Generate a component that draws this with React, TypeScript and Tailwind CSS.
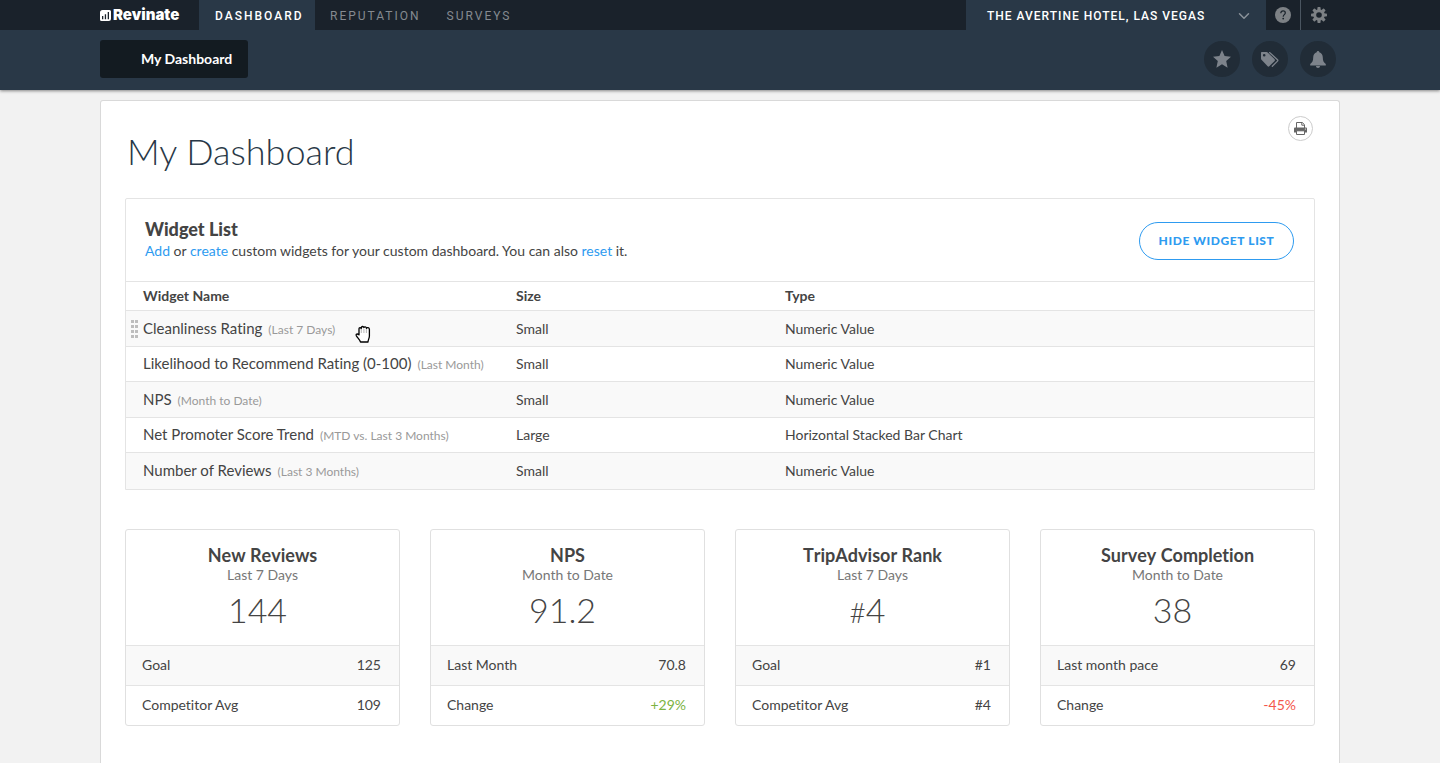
import React from "react";
import { ChevronDown } from "lucide-react";

const widgets = [
  { name: "Cleanliness Rating", period: "(Last 7 Days)", size: "Small", type: "Numeric Value", active: true },
  { name: "Likelihood to Recommend Rating (0-100)", period: "(Last Month)", size: "Small", type: "Numeric Value" },
  { name: "NPS", period: "(Month to Date)", size: "Small", type: "Numeric Value" },
  { name: "Net Promoter Score Trend", period: "(MTD vs. Last 3 Months)", size: "Large", type: "Horizontal Stacked Bar Chart" },
  { name: "Number of Reviews", period: "(Last 3 Months)", size: "Small", type: "Numeric Value" },
];

type Card = {
  title: string;
  period: string;
  prefix?: string;
  value: string;
  rows: { label: string; value: string; tone?: string }[];
};

const cards: Card[] = [
  { title: "New Reviews", period: "Last 7 Days", value: "144", rows: [{ label: "Goal", value: "125" }, { label: "Competitor Avg", value: "109" }] },
  { title: "NPS", period: "Month to Date", value: "91.2", rows: [{ label: "Last Month", value: "70.8" }, { label: "Change", value: "+29%", tone: "text-[#7cb342]" }] },
  { title: "TripAdvisor Rank", period: "Last 7 Days", prefix: "#", value: "4", rows: [{ label: "Goal", value: "#1" }, { label: "Competitor Avg", value: "#4" }] },
  { title: "Survey Completion", period: "Month to Date", value: "38", rows: [{ label: "Last month pace", value: "69" }, { label: "Change", value: "-45%", tone: "text-[#f4574b]" }] },
];

function LogoMark() {
  return (
    <svg width="11" height="11" viewBox="0 0 11 11" className="shrink-0" aria-hidden="true">
      <path d="M2.500 0H9.500A1.500 1.500 0 0 1 11 1.500V8.500A2.500 2.500 0 0 1 8.500 11H1.500A1.500 1.500 0 0 1 0 9.500V2.500A2.500 2.500 0 0 1 2.500 0Z" fill="#fff" />
      <path d="M2 6h1.300v3.200H2zM4.800 4.200h1.300v5H4.800zM7.700 2h1.300v7.200H7.700z" fill="#1a222b" />
    </svg>
  );
}

function HelpIcon() {
  return (
    <svg width="16" height="16" viewBox="0 0 16 16" aria-hidden="true">
      <circle cx="8" cy="8" r="8" fill="#7d8185" />
      <path d="M5.800 6.200C5.800 4.700 6.700 3.900 8.100 3.900s2.200.8 2.200 2c0 1.700-2.100 1.900-2.100 3.800" fill="none" stroke="#1a222b" strokeWidth="1.200" />
      <circle cx="8.200" cy="11.600" r=".9" fill="#1a222b" />
    </svg>
  );
}

function GearIcon() {
  return (
    <svg width="16" height="16" viewBox="0 0 16 16" fill="#7d8185" aria-hidden="true">
      {[0, 45, 90, 135].map((angle) => (
        <rect key={angle} x="6.400" y="0" width="3.200" height="16" rx=".8" transform={`rotate(${angle} 8 8)`} />
      ))}
      <circle cx="8" cy="8" r="5.800" />
      <circle cx="8" cy="8" r="2.800" fill="#1a222b" />
    </svg>
  );
}

function StarIcon() {
  return (
    <svg width="18" height="18" viewBox="0 0 18 18" fill="#7d838b" aria-hidden="true">
      <path d="M9 0l2.600 6.100 6.400.6-4.800 4.400 1.400 6.600L9 14.300l-5.600 3.400 1.400-6.600L0 6.700l6.400-.6Z" />
    </svg>
  );
}

function TagsIcon() {
  return (
    <svg width="18" height="15" viewBox="0 0 18 15" fill="#7d838b" aria-hidden="true">
      <path
        fillRule="evenodd"
        d="M1 0h4.500c.5 0 .9.200 1.200.5l6.700 6.600c.7.700.7 1.400 0 2.100l-4.900 4.900c-.7.700-1.400.7-2.100 0L.5 7.700C.2 7.300 0 6.900 0 6.400V1C0 .4.4 0 1 0Zm2.200 2a1.300 1.300 0 1 0 0 2.600 1.300 1.300 0 0 0 0-2.600Z"
      />
      <path d="M8.600.6l7.900 7.200c.4.400.4.900 0 1.300l-5.200 5.200" fill="none" stroke="#7d838b" strokeWidth="1.300" strokeLinecap="round" />
    </svg>
  );
}

function BellIcon() {
  return (
    <svg width="16" height="17" viewBox="0 0 16 17" fill="#7d838b" aria-hidden="true">
      <path d="M8 0c.8 0 1.300.6 1.300 1.300C11.600 2 12.800 4 12.800 6.500c0 3.500.9 5 3 6.500v1.500H.2V13c2.100-1.500 3-3 3-6.500C3.200 4 4.400 2 6.700 1.300 6.700.6 7.200 0 8 0Z" />
      <path d="M6 15h4c0 1.200-.8 2-2 2s-2-.8-2-2Z" />
    </svg>
  );
}

function PrintIcon() {
  return (
    <svg width="13" height="13" viewBox="0 0 13 13" aria-hidden="true">
      <path d="M2.500 6V.5h5.800l2.200 2.200V6M7.800.5v2.700h2.700" fill="none" stroke="#666" />
      <path d="M1.200 5.500h10.600c.7 0 1.200.5 1.200 1.200V10.500H0V6.700c0-.7.500-1.200 1.200-1.200Z" fill="#666" />
      <path d="M2.500 8.800h8v3.700h-8z" fill="#fff" stroke="#666" />
      <circle cx="11.400" cy="7" r=".6" fill="#fff" />
    </svg>
  );
}

function GrabHand() {
  return (
    <svg width="16" height="18" viewBox="0 0 16 18" aria-hidden="true">
      <path
        d="M4 9.500V3.800c0-1.500 2-1.500 2.200-.2C6.200 1 8.700.9 8.900 2.700c.3-1.300 2.500-1.200 2.600.7.400-1.200 2.800-1.100 2.900 1V11c0 2.600-1.400 3.600-1.400 6H5.500C5 15 2.400 12.800 1.300 10.600.600 9 2.400 8.300 4 9.900Z"
        fill="#fff"
        stroke="#000"
        strokeWidth="1.300"
        strokeLinejoin="round"
      />
      <path d="M6.300 4v4M8.900 4v4M11.400 4v4" stroke="#999" strokeWidth=".7" />
    </svg>
  );
}

function DragHandle() {
  return (
    <span className="absolute left-[5px] top-[9px] grid grid-cols-2 gap-px">
      {Array.from({ length: 8 }, (_, i) => (
        <span key={i} className="mb-px size-[3px] bg-[#bdbdbd]" />
      ))}
    </span>
  );
}

function RoundButton({ label, children }: { label: string; children: React.ReactNode }) {
  return (
    <button type="button" aria-label={label} className="flex size-9 items-center justify-center rounded-full bg-[#212c37]">
      {children}
    </button>
  );
}

export default function App() {
  return (
    <div className="min-h-screen bg-[#f2f2f2] font-['Lato',sans-serif] text-[#444] [font-variant-ligatures:none]">
      <header className="bg-[#293847] shadow-[0_1px_3px_rgba(0,0,0,0.45)]">
        <div className="bg-[#1a222b]">
          <div className="mx-auto flex h-[30px] max-w-[1240px] items-stretch font-['Roboto',sans-serif] text-xs">
            <a href="#" className="flex w-[99px] items-center gap-[2px] font-['Inter',sans-serif] text-[15px] font-black text-white">
              <LogoMark />
              Revinate
            </a>
            <nav className="flex tracking-[2px] text-[#858a90]">
              <a href="#" className="flex w-[116px] items-center bg-[#293847] pl-4 pt-[2px] font-medium text-white">DASHBOARD</a>
              <a href="#" className="flex items-center pl-[15px] pt-[2px]">REPUTATION</a>
              <a href="#" className="flex items-center pl-[26px] pt-[2px]">SURVEYS</a>
            </nav>
            <button type="button" className="ml-auto flex w-[300px] items-center justify-between bg-[#293847] pl-[21px] pr-[13px] pt-[2px] font-medium tracking-[1px] text-white">
              THE AVERTINE HOTEL, LAS VEGAS
              <ChevronDown size={18} strokeWidth={2} className="text-[#8a9199]" />
            </button>
            <button type="button" aria-label="Help" className="flex w-[35px] items-center justify-center border-r border-[#4a5560]">
              <HelpIcon />
            </button>
            <button type="button" aria-label="Settings" className="mr-[3px] flex w-9 items-center justify-center">
              <GearIcon />
            </button>
          </div>
        </div>
        <div className="mx-auto flex h-[60px] max-w-[1240px] items-start justify-between pr-1 pt-[10px]">
          <button type="button" className="h-[38px] rounded-[3px] bg-[#131b21] pl-[41px] pr-4 text-sm font-bold text-white">
            My Dashboard
          </button>
          <div className="flex gap-3 pt-px">
            <RoundButton label="Favorites"><StarIcon /></RoundButton>
            <RoundButton label="Tags"><TagsIcon /></RoundButton>
            <RoundButton label="Notifications"><BellIcon /></RoundButton>
          </div>
        </div>
      </header>

      <main className="mx-auto mt-[10px] min-h-[663px] max-w-[1240px] rounded-t-[3px] border border-b-0 border-[#d9d9d9] bg-white px-6 pb-9 pt-[15px]">
        <div className="flex h-[82px] items-start justify-between">
          <h1 className="pl-[2px] pt-[11px] text-4xl font-light leading-[48px] text-[#293847]">My Dashboard</h1>
          <button type="button" aria-label="Print" className="mr-[2px] flex size-[25px] items-center justify-center rounded-full border border-[#ccc]">
            <PrintIcon />
          </button>
        </div>

        <section className="rounded-t-[2px] border border-[#e4e4e4]">
          <div className="flex h-[82px] items-start justify-between pl-[19px] pr-5 pt-[19px]">
            <div>
              <h2 className="text-lg font-black leading-[22px]">Widget List</h2>
              <p className="text-sm leading-[22px]">
                <a href="#" className="text-[#2e9bf0]">Add</a> or <a href="#" className="text-[#2e9bf0]">create</a> custom widgets for your custom dashboard. You can also{" "}
                <a href="#" className="text-[#2e9bf0]">reset</a> it.
              </p>
            </div>
            <button type="button" className="mt-1 h-[38px] w-[155px] rounded-full border border-[#2e9bf0] text-xs font-black tracking-wider text-[#2e9bf0]">
              HIDE WIDGET LIST
            </button>
          </div>
          <table className="w-full table-fixed border-collapse text-left text-sm">
            <thead>
              <tr className="h-[29px] border-t border-[#e4e4e4] font-bold">
                <th className="w-[373px] pl-[17px]">Widget Name</th>
                <th className="w-[269px] pl-[17px]">Size</th>
                <th className="pl-[17px]">Type</th>
              </tr>
            </thead>
            <tbody>
              {widgets.map((w) => (
                <tr key={w.name} className="h-[35px] border-t border-[#e4e4e4] odd:h-9 odd:bg-[#f9f9f9]">
                  <td className="relative pl-[17px] text-[15px]">
                    {w.active && <DragHandle />}
                    {w.name}
                    <span className="ml-[6px] text-xs text-[#999]">{w.period}</span>
                    {w.active && (
                      <span className="absolute left-[229px] top-[14px]">
                        <GrabHand />
                      </span>
                    )}
                  </td>
                  <td className="pl-[17px]">{w.size}</td>
                  <td className="pl-[17px]">{w.type}</td>
                </tr>
              ))}
            </tbody>
          </table>
        </section>

        <div className="mt-[39px] grid grid-cols-4 gap-[30px]">
          {cards.map((c) => (
            <section key={c.title} className="rounded-[3px] border border-[#e0e0e0]">
              <div className="flex h-[115px] flex-col items-center pt-[14px]">
                <h3 className="text-lg font-bold leading-[22px] [font-kerning:none]">{c.title}</h3>
                <p className="text-sm leading-[18px] text-[#777]">{c.period}</p>
                <p className="mr-[10px] mt-[2px] text-[34px] font-light leading-[48px]">
                  {c.prefix && <span className="text-[28px]">{c.prefix}</span>}
                  {c.value}
                </p>
              </div>
              <dl className="text-sm">
                {c.rows.map((r) => (
                  <div key={r.label} className="flex h-10 items-center justify-between border-t border-[#e4e4e4] pl-4 pr-[18px] odd:bg-[#f9f9f9]">
                    <dt>{r.label}</dt>
                    <dd className={r.tone}>{r.value}</dd>
                  </div>
                ))}
              </dl>
            </section>
          ))}
        </div>
      </main>
    </div>
  );
}
